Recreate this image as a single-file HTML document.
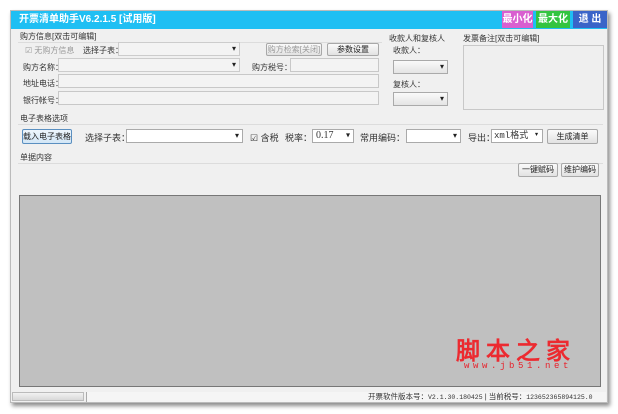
<!DOCTYPE html>
<html><head><meta charset="utf-8"><style>
*{box-sizing:border-box;margin:0;padding:0}
body{width:618px;height:414px;background:#fff;position:relative;overflow:hidden;font-family:"Liberation Sans","Noto Sans CJK SC",sans-serif;font-size:9px;color:#333}
.a{position:absolute}
.win{left:10px;top:10px;width:598px;height:393px;background:#f0f0f0;border:1px solid #bbb;box-shadow:2px 3px 4px rgba(0,0,0,.45)}
.title{left:11px;top:11px;width:596px;height:18px;background:#1fbff3;color:#fff;font-weight:bold;font-size:10px;line-height:18px;padding-left:8px}
.tb{top:11px;height:17px;color:#fff;font-weight:bold;font-size:10px;line-height:17px;text-align:center}
.in{background:#f3f3f3;border:1px solid #c8c8c8}
.sel{background:#fff;border:1px solid #aaa}
.sel:after{content:"▾";position:absolute;right:3px;top:50%;transform:translateY(-55%);font-size:8px;color:#222}
.btn{background:linear-gradient(#fafafa,#e2e2e2);border:1px solid #a8a8a8;border-radius:2px;text-align:center;line-height:12px;font-size:8px;color:#222}
.lbl{font-size:8px;color:#333}
.grp{border-top:1px solid #dcdcdc}
</style></head><body>
<div class="a win"></div>
<div class="a title">开票清单助手V6.2.1.5 [试用版]</div>
<div class="a tb" style="left:502px;width:31px;background:#d95fd0">最小化</div>
<div class="a tb" style="left:536px;width:34px;background:#33c440">最大化</div>
<div class="a tb" style="left:573px;width:34px;background:#3a64c8">退 出</div>

<div class="a lbl" style="left:20px;top:31px">购方信息[双击可编辑]</div>
<div class="a grp" style="left:18px;top:42px;width:364px"></div>
<div class="a lbl" style="left:25px;top:45px;color:#999">☑ 无购方信息</div>
<div class="a lbl" style="left:83px;top:45px">选择子表：</div>
<div class="a in sel" style="left:118px;top:42px;width:122px;height:14px;background:#f3f3f3;border-color:#ccc"></div>
<div class="a btn" style="left:266px;top:43px;width:56px;height:13px;color:#999">购方检索[关闭]</div>
<div class="a btn" style="left:327px;top:43px;width:52px;height:13px">参数设置</div>
<div class="a lbl" style="left:23px;top:62px">购方名称：</div>
<div class="a in sel" style="left:58px;top:58px;width:182px;height:14px;background:#f3f3f3;border-color:#ccc"></div>
<div class="a lbl" style="left:252px;top:62px">购方税号：</div>
<div class="a in" style="left:290px;top:58px;width:89px;height:14px"></div>
<div class="a lbl" style="left:23px;top:78px">地址电话：</div>
<div class="a in" style="left:58px;top:74px;width:321px;height:14px"></div>
<div class="a lbl" style="left:23px;top:95px">银行帐号：</div>
<div class="a in" style="left:58px;top:91px;width:321px;height:14px"></div>

<div class="a lbl" style="left:389px;top:33px">收款人和复核人</div>
<div class="a lbl" style="left:393px;top:45px">收款人：</div>
<div class="a sel" style="left:393px;top:60px;width:55px;height:14px;background:linear-gradient(#fafafa,#e4e4e4)"></div>
<div class="a lbl" style="left:393px;top:79px">复核人：</div>
<div class="a sel" style="left:393px;top:92px;width:55px;height:14px;background:linear-gradient(#fafafa,#e4e4e4)"></div>

<div class="a lbl" style="left:463px;top:33px">发票备注[双击可编辑]</div>
<div class="a in" style="left:463px;top:45px;width:141px;height:65px;background:#efefef"></div>

<div class="a lbl" style="left:20px;top:113px">电子表格选项</div>
<div class="a grp" style="left:18px;top:124px;width:585px"></div>
<div class="a btn" style="left:22px;top:129px;width:50px;height:15px;line-height:13px;border-color:#5a8fc0;background:linear-gradient(#eef6fc,#d2e6f6)">载入电子表格</div>
<div class="a lbl" style="left:85px;top:131px;font-size:9px">选择子表：</div>
<div class="a sel" style="left:126px;top:129px;width:117px;height:14px"></div>
<div class="a lbl" style="left:250px;top:131px;font-size:9px">☑ 含税</div>
<div class="a lbl" style="left:285px;top:131px;font-size:9px">税率：</div>
<div class="a sel" style="left:312px;top:129px;width:42px;height:14px;font-family:'Liberation Serif',serif;font-size:10px;padding-left:3px;line-height:12px">0.17</div>
<div class="a lbl" style="left:360px;top:131px;font-size:9px">常用编码：</div>
<div class="a sel" style="left:406px;top:129px;width:55px;height:14px"></div>
<div class="a lbl" style="left:468px;top:131px;font-size:9px">导出：</div>
<div class="a sel" style="left:491px;top:129px;width:52px;height:14px;font-family:'Liberation Mono','Noto Sans CJK SC',monospace;font-size:9px;padding-left:2px;line-height:12px">xml格式</div>
<div class="a btn" style="left:547px;top:129px;width:51px;height:15px;line-height:13px">生成清单</div>

<div class="a lbl" style="left:20px;top:152px">单据内容</div>
<div class="a grp" style="left:18px;top:163px;width:585px"></div>
<div class="a btn" style="left:518px;top:163px;width:40px;height:14px">一键赋码</div>
<div class="a btn" style="left:561px;top:163px;width:38px;height:14px">维护编码</div>

<div class="a" style="left:19px;top:195px;width:582px;height:192px;background:#c0c0c0;border:1px solid #777"></div>
<div class="a" style="left:456px;top:331px;font-size:24px;font-weight:bold;color:#ec2a30;letter-spacing:6px;font-family:'WenQuanYi Zen Hei',sans-serif">脚本之家</div>
<div class="a" style="left:464px;top:361px;font-size:9px;color:#e8202a;letter-spacing:3.6px;font-family:'Liberation Mono',monospace">www.jb51.net</div>

<div class="a" style="left:12px;top:392px;width:72px;height:9px;background:linear-gradient(#f2f2f2,#d8d8d8);border:1px solid #bbb"></div>
<div class="a" style="left:86px;top:392px;width:520px;height:10px;background:#f5f5f5;border-left:1px solid #aaa"></div>
<div class="a" style="left:368px;top:391px;font-size:7.5px;color:#333;white-space:nowrap">开票软件版本号：<span style="font-family:'Liberation Mono',monospace;font-size:6.5px">V2.1.30.180425</span> | 当前税号：<span style="font-family:'Liberation Mono',monospace;font-size:6.5px">123652365894125.0</span></div>
</body></html>
